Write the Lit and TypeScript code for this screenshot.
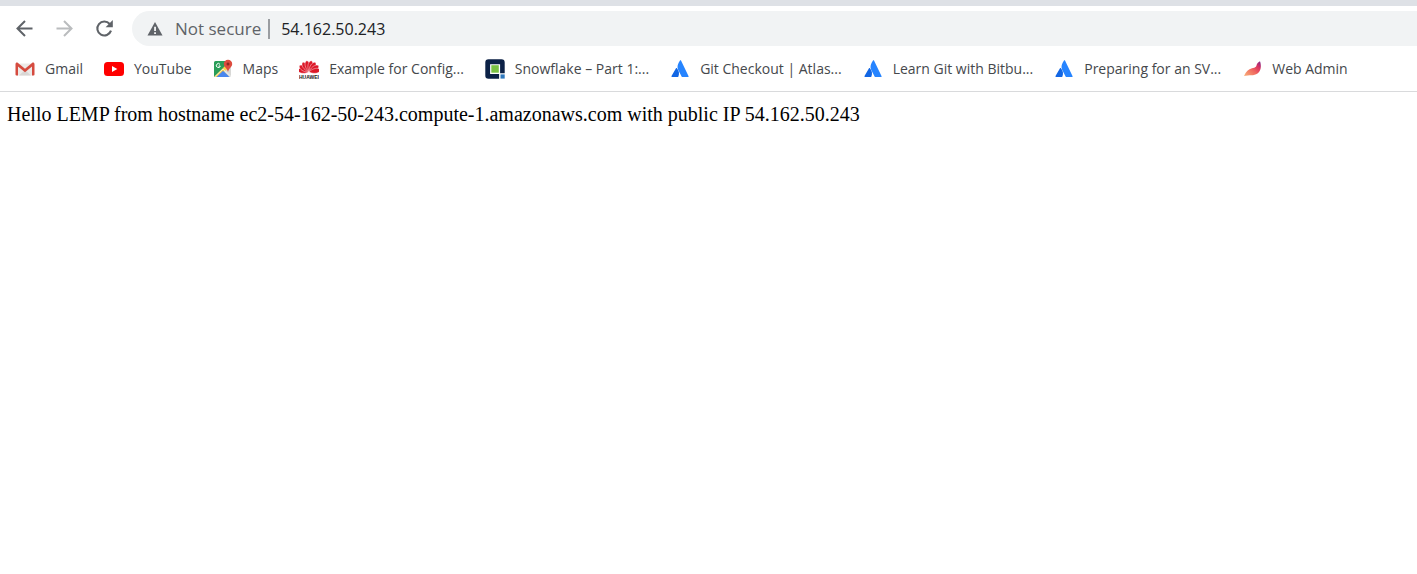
import { LitElement, html, css, svg } from "lit";
import { customElement } from "lit/decorators.js";

const petals = [-80, -57, -34, -12, 12, 34, 57, 80];

const icons: Record<string, unknown> = {
  gmail: svg`
    <path d="M2 4.500h16v12H2z" fill="#eceae8"/>
    <path d="M4 16.500 10 11l6 5.500z" fill="#d9d7d5"/>
    <path d="M.5 5.200C.5 3.600 2 3.200 3 4l7 5.800L17 4c1-.8 2.500-.4 2.500 1.200v10.300a1 1 0 0 1-1 1H17V7.600l-7 5.700-7-5.700v8.900H1.500a1 1 0 0 1-1-1z" fill="#d54b3f"/>`,
  youtube: svg`
    <rect y="3" width="20" height="14" rx="3.500" fill="#f00"/>
    <path d="M8 7v6l5.300-3z" fill="#fff"/>`,
  maps: svg`
    <path d="M2.500 2H15v16H2.500A1.500 1.500 0 0 1 1 16.500v-13A1.500 1.500 0 0 1 2.500 2z" fill="#2a9d58"/>
    <path d="M9 11.500 18 8v8.500a1.500 1.500 0 0 1-1.500 1.500H16z" fill="#d8d8d6"/>
    <path d="M1.500 17.500 14 5l2 4L4 18H2.500z" fill="#fcd049"/>
    <path d="m3.500 18 6.500-6.200 6.500 6.200z" fill="#4a86ee"/>
    <path d="m2 17.500 8-7.500 8 7.500" fill="none" stroke="#f2f2f2" stroke-width=".8"/>
    <path d="M7 5.400A2 2 0 1 0 7.300 7H5.500" fill="none" stroke="#fff" stroke-width="1"/>
    <path d="M15 .8a4.200 4.200 0 0 1 4.200 4.200c0 3-3.400 4-4.200 8-.8-4-4.200-5-4.200-8A4.200 4.200 0 0 1 15 .8z" fill="#dd4b3e"/>
    <circle cx="15" cy="5" r="1.500" fill="#8c2a22"/>`,
  huawei: svg`
    ${petals.map(
      (a) => svg`<path d="M10 13C7.400 9.500 7 5 8.400 2.800 8.800 2.100 9.400 1.700 10 1.500c.6.200 1.200.6 1.600 1.300C13 5 12.600 9.500 10 13z" fill="#dc1828" stroke="#fff" stroke-width=".4"
        transform=${`rotate(${a} 10 13)`}/>`
    )}
    <path d="M0 15.200h20V20H0z" fill="#fff"/>
    <text x="10" y="19.800" text-anchor="middle" font-family="Liberation Sans, sans-serif" font-weight="700" font-size="5" fill="#1c1718">HUAWEI</text>`,
  snowflake: svg`
    <path d="M3.500.2h13A3.200 3.200 0 0 1 19.700 3.400V14.200h-4.600v-9h-10v9.900h9v4.600H3.500A3.200 3.200 0 0 1 .3 16.400v-13A3.200 3.200 0 0 1 3.500.2z" fill="#0c2146"/>
    <path d="M6.300 6.200h7.500v7.500H6.300z" fill="#7ac143"/>
    <path d="M15.500 15.400h4.200v4.200h-4.200z" fill="#2f78bd"/>`,
  atlassian: svg`
    <path d="M6 9.200c.3-.4.700-.3.900.1 2.500 2.900 2.600 5.700 1.300 8.700H2c-.6 0-.8-.4-.5-.9z" fill="#1266e4"/>
    <path d="M10 1.500c.3-.5.800-.5 1 0l7.600 15.700c.2.500 0 .8-.5.800h-5.600c-.5 0-.7-.2-.9-.6L8 10.500C6.700 7.500 8 4.500 10 1.500z" fill="#2684ff"/>`,
  admin: svg`
    <defs>
      <linearGradient id="feather" x1="0" y1="1" x2="1" y2="0">
        <stop offset="0" stop-color="#f9b27a"/><stop offset=".45" stop-color="#f0695f"/>
        <stop offset=".72" stop-color="#dc3560"/><stop offset="1" stop-color="#75258f"/>
      </linearGradient>
    </defs>
    <path d="M18 2.200c1.700 5 1 9.500-2.500 12.300-3.600 2.700-8.300 1.200-13.500 2.500C4 12.600 6.500 10.300 10 9.300c3.400-1 4.200-1.300 4.700-3.600C15 4 16.500 3.500 18 2.200z" fill="url(#feather)"/>`,
};

const bookmarks = [
  { icon: "gmail", label: "Gmail" },
  { icon: "youtube", label: "YouTube" },
  { icon: "maps", label: "Maps" },
  { icon: "huawei", label: "Example for Config..." },
  { icon: "snowflake", label: "Snowflake – Part 1:..." },
  { icon: "atlassian", label: "Git Checkout | Atlas..." },
  { icon: "atlassian", label: "Learn Git with Bitbu..." },
  { icon: "atlassian", label: "Preparing for an SV..." },
  { icon: "admin", label: "Web Admin" },
];

@customElement("app-root")
export class AppRoot extends LitElement {
  static styles = css`
    :host {
      display: block;
      min-height: 100vh;
      background: #fff;
      font-family: "Open Sans", "Noto Sans", sans-serif;
    }
    svg {
      display: block;
      flex: none;
    }
    .chrome {
      border-top: 6px solid #dee1e6;
      border-bottom: 1px solid #d9dadc;
      overflow: hidden;
    }
    .toolbar {
      display: flex;
      align-items: center;
      padding: 5px 0 0 14px;
    }
    .nav {
      display: flex;
      gap: 20px;
      margin-right: 18px;
    }
    button {
      display: flex;
      align-items: center;
      padding: 0;
      border: 0;
      background: none;
      font: inherit;
      color: inherit;
    }
    .address {
      display: flex;
      flex: 1;
      align-items: center;
      height: 35px;
      padding-left: 13px;
      border-radius: 18px 0 0 18px;
      background: #f1f3f4;
      font-size: 17px;
      color: #5f6368;
    }
    .security {
      gap: 10px;
      white-space: nowrap;
    }
    .divider {
      width: 2px;
      height: 20px;
      margin: 0 11px 0 7px;
      background: #9a9da1;
    }
    .url {
      flex: 1;
      min-width: 0;
      padding: 0;
      border: 0;
      outline: 0;
      background: none;
      font: inherit;
      font-size: 16px;
      color: #202124;
    }
    .bookmarks {
      display: flex;
      gap: 21px;
      height: 45px;
      padding-left: 15px;
      align-items: center;
    }
    .bookmark {
      display: flex;
      flex: none;
      align-items: center;
      gap: 10px;
      font-size: 14px;
      line-height: 20px;
      color: #45484c;
      text-decoration: none;
      white-space: nowrap;
    }
    .page {
      padding: 11px 7px;
      font-family: "Liberation Serif", "Times New Roman", serif;
      font-size: 20px;
      line-height: 22px;
      color: #000;
    }
    .page p {
      margin: 0;
    }
  `;

  render() {
    return html`
      <header class="chrome">
        <div class="toolbar">
          <nav class="nav" aria-label="History">
            <button aria-label="Back">
              <svg width="20" height="20" viewBox="0 0 20 20" fill="none" stroke="#5f6368" stroke-width="2"><path d="M18.500 9.500H4M11 2 3.500 9.500 11 17"/></svg>
            </button>
            <button aria-label="Forward" disabled>
              <svg width="20" height="20" viewBox="0 0 20 20" fill="none" stroke="#babcbe" stroke-width="2"><path d="M2.500 9.500H17M10 2l7.500 7.500L10 17"/></svg>
            </button>
            <button aria-label="Reload">
              <svg width="20" height="20" viewBox="0 0 20 20"><path d="M17 11.700A7 7 0 1 1 15.700 5" fill="none" stroke="#5f6368" stroke-width="2.100"/><path d="M18.800 1v7.200h-7.200z" fill="#5f6368"/></svg>
            </button>
          </nav>
          <div class="address">
            <button class="security">
              <svg width="20" height="20" viewBox="0 0 20 20"><path d="M10 3 17.500 16.500h-15z" fill="#5f6368"/><path d="M9.200 7.800h1.700v4.200H9.200zM9.200 13.200h1.700v1.700H9.200z" fill="#fff"/></svg>
              <span>Not secure</span>
            </button>
            <span class="divider"></span>
            <input class="url" type="text" aria-label="Address" value="54.162.50.243" />
          </div>
        </div>
        <nav class="bookmarks" aria-label="Bookmarks">
          ${bookmarks.map(
            (b) => html`<a class="bookmark" href="#">
              <svg width="20" height="20" viewBox="0 0 20 20" aria-hidden="true">${icons[b.icon]}</svg>
              <span>${b.label}</span>
            </a>`
          )}
        </nav>
      </header>
      <main class="page">
        <p>Hello LEMP from hostname ec2-54-162-50-243.compute-1.amazonaws.com with public IP 54.162.50.243</p>
      </main>
    `;
  }
}
